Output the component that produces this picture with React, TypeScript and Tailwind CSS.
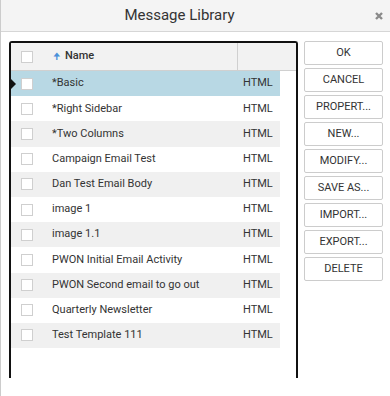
const rows = [
  '*Basic',
  '*Right Sidebar',
  '*Two Columns',
  'Campaign Email Test',
  'Dan Test Email Body',
  'image 1',
  'image 1.1',
  'PWON Initial Email Activity',
  'PWON Second email to go out',
  'Quarterly Newsletter',
  'Test Template 111',
];

const buttons = ['OK', 'CANCEL', 'PROPERT...', 'NEW...', 'MODIFY...', 'SAVE AS...', 'IMPORT...', 'EXPORT...', 'DELETE'];

function Check() {
  return <div className="w-[12px] h-[12px] border border-[#cfcfcf] bg-white shrink-0" />;
}

export default function App() {
  return (
    <div className="w-[390px] h-[396px] bg-white border-l border-[#cccccc] overflow-hidden font-['Roboto',sans-serif] text-[#333]">
      <div className="h-[32px] bg-[#f4f4f4] border-b border-[#d6d6d6] flex items-center">
        <div className="flex-1 text-center text-[15px] pl-[2px]">Message Library</div>
        <div className="w-[34px] flex justify-center pl-[12px]">
          <svg width="8" height="8" viewBox="0 0 8 8">
            <path d="M1 1L7 7M7 1L1 7" stroke="#8a8a8a" strokeWidth="2.4" />
          </svg>
        </div>
      </div>
      <div className="flex pt-[9px] pl-[8px]">
        <div className="w-[289px] h-[337px] border-2 border-b-0 border-[#111] rounded-t-[3px] overflow-hidden">
          <div className="h-[28px] bg-[#f2f2f2] border-b border-[#d0d0d0] flex items-center">
            <div className="w-[41px] pl-[10px]">
              <Check />
            </div>
            <div className="w-[185px] flex items-center text-[11px] font-medium">
              <span className="text-[#4a90d9] text-[9px] pl-[1px] pr-[5px]">🠉</span>
              Name
            </div>
            <div className="h-full border-l border-[#d0d0d0] flex-1" />
          </div>
          <div className="w-[269px]">
            {rows.map((name, i) => (
              <div
                key={name}
                className={
                  'h-[25.2px] flex items-center text-[11px] relative ' +
                  (i === 0 ? 'bg-[#b8d8e4]' : i % 2 === 0 ? 'bg-[#f0f0f0]' : 'bg-white')
                }
              >
                {i === 0 && (
                  <svg className="absolute left-0" width="5" height="10" viewBox="0 0 5 10">
                    <path d="M0 0L5 5L0 10Z" fill="#111" />
                  </svg>
                )}
                <div className="w-[41px] pl-[10px]">
                  <Check />
                </div>
                <div className="w-[191px] truncate">{name}</div>
                <div>HTML</div>
              </div>
            ))}
          </div>
        </div>
        <div className="ml-[6px] w-[79px] flex flex-col gap-[3px]">
          {buttons.map((b) => (
            <div
              key={b}
              className="h-[24px] border border-[#cccccc] rounded-[2px] bg-white flex items-center justify-center text-[11px] text-[#333]"
            >
              {b}
            </div>
          ))}
        </div>
      </div>
    </div>
  );
}
